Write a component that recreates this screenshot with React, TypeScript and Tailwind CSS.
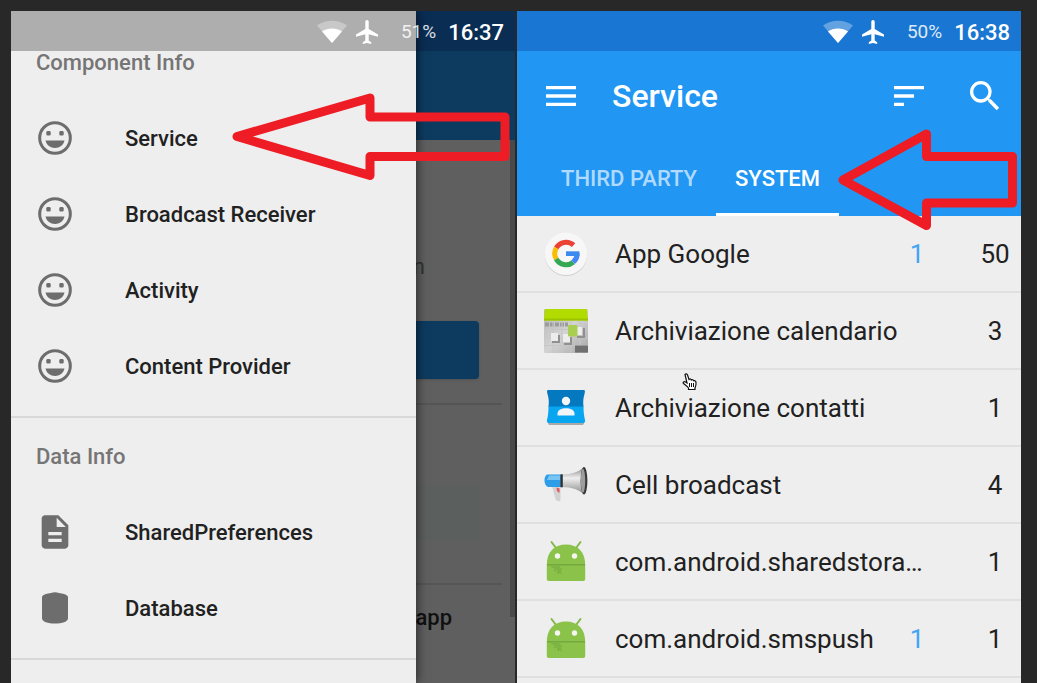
import type { ComponentType, ReactNode } from "react";
import { MdDescription, MdMenu, MdSearch, MdSort } from "react-icons/md";

type IconProps = { className?: string };

function WifiIcon({ className }: IconProps) {
  return (
    <svg viewBox="0 0 30 24" className={className} aria-hidden="true">
      <path d="M0 5.500C8-1 22-1 30 5.500L15 23Z" fill="#fff" fillOpacity="0.32" />
      <path d="M5 11.500C10 7.500 20 7.500 25 11.500L15 23Z" fill="#fff" />
    </svg>
  );
}

function PlaneIcon({ className }: IconProps) {
  return (
    <svg viewBox="0 0 24 26" className={className} aria-hidden="true" fill="#fff">
      <path d="M12 1c-.9 0-1.700.8-1.700 1.700V10L1 15.500V17.800l9.300-2.600V21.500L7.800 23.200V25l4.200-1 4.200 1V23.200L13.700 21.500V15.200L23 17.800V15.500L13.700 10V2.700C13.700 1.800 12.900 1 12 1Z" />
    </svg>
  );
}

function SmileIcon({ className }: IconProps) {
  return (
    <svg viewBox="0 0 24 24" className={className} aria-hidden="true" fill="currentColor">
      <circle cx="12" cy="12" r="9.200" fill="none" stroke="currentColor" strokeWidth="1.800" />
      <rect x="6.800" y="7.800" width="2.600" height="2.700" rx="0.800" />
      <rect x="14.600" y="7.800" width="2.600" height="2.700" rx="0.800" />
      <path d="M6.300 13.500H17.700C17 16.300 14.800 18 12 18S7 16.300 6.300 13.500Z" />
    </svg>
  );
}

function DatabaseIcon({ className }: IconProps) {
  return (
    <svg viewBox="0 0 40 40" className={className} aria-hidden="true" fill="currentColor">
      <path d="M7 9C7 6.500 13 5.500 16 5Q20 3.500 24 5C27 5.500 33 6.500 33 9V30.500C33 33.500 27 35.500 20 35.500S7 33.500 7 30.500Z" />
    </svg>
  );
}

function GoogleIcon({ className }: IconProps) {
  return (
    <svg viewBox="0 0 44 44" className={className} aria-hidden="true">
      <circle cx="22" cy="22.800" r="21.200" fill="#cfcfcf" />
      <circle cx="22" cy="21.800" r="21.200" fill="#f7f7f7" />
      <g fill="none" strokeWidth="5">
        <path d="M29.600 13.200A11.300 11.300 0 0 0 12.200 16" stroke="#ea4335" />
        <path d="M12.200 16A11.300 11.300 0 0 0 12.200 27" stroke="#fbbc05" />
        <path d="M12.200 27A11.300 11.300 0 0 0 29.200 30.200" stroke="#34a853" />
        <path d="M29.200 30.200A11.300 11.300 0 0 0 33.200 21.600" stroke="#4285f4" />
      </g>
      <path d="M22 19.300H35.400V24H22Z" fill="#3b8bee" />
    </svg>
  );
}

function CalendarIcon({ className }: IconProps) {
  return (
    <svg viewBox="0 0 44 44" className={className} aria-hidden="true">
      <defs>
        <linearGradient id="calendar-page" x1="0" y1="0" x2="1" y2="1">
          <stop offset="0" stopColor="#b5b5b5" />
          <stop offset="0.5" stopColor="#d3d3d3" />
          <stop offset="1" stopColor="#a8a8a8" />
        </linearGradient>
      </defs>
      <rect width="44" height="44" rx="1.500" fill="url(#calendar-page)" />
      <path d="M1 0H43L44 11.500H0Z" fill="#b2dc00" />
      <path d="M0 9.500H44V11.500H0Z" fill="#9cc400" />
      <path d="M1 15.500H24" stroke="#9c9c9c" strokeWidth="4" strokeDasharray="4 1" />
      <path d="M0 20.500H44M0 29H44M0 36.500H44M9 12V44M18 12V44M27 12V44M36 12V44" stroke="#c6c6c6" strokeWidth="1" />
      <path d="M8 33H15V26M20 35H27V28M33 28H40V19" stroke="#909090" strokeWidth="2" fill="none" />
      <rect x="7" y="24" width="7" height="8" fill="#ececec" />
      <rect x="19" y="25" width="7" height="8" fill="#ededed" />
      <rect x="31" y="18" width="7" height="8" fill="#ededed" />
      <rect x="24" y="16" width="9.500" height="11.500" rx="1" fill="#a9cf52" />
      <rect x="31" y="36.500" width="13" height="7" fill="#707070" />
    </svg>
  );
}

function ContactsIcon({ className }: IconProps) {
  return (
    <svg viewBox="0 0 44 44" className={className} aria-hidden="true">
      <path d="M4 36H40V37C40 38.500 39 39 38 39H6C5 39 4 38.500 4 37Z" fill="#a9a9a9" />
      <path d="M4.500 4H39.500C41.500 4 41 6 40.500 8C39 13 39 16 39.500 21H4.500C5 16 5 13 3.500 8C3 6 2.500 4 4.500 4Z" fill="#0479bf" />
      <path d="M4.500 20.500H39.500C39.500 26 40 30 41 34C41.500 36 40.500 37 39 37H5C3.500 37 2.500 36 3 34C4 30 4.500 26 4.500 20.500Z" fill="#08a5f1" />
      <circle cx="22" cy="15" r="4.200" fill="#f2f6f8" />
      <path d="M13.500 29.500V27.500C13.500 20.500 30.500 20.500 30.500 27.500V29.500Z" fill="#f2f6f8" />
    </svg>
  );
}

function MegaphoneIcon({ className }: IconProps) {
  return (
    <svg viewBox="0 0 44 44" className={className} aria-hidden="true">
      <defs>
        <linearGradient id="horn" x1="0" y1="0" x2="0" y2="1">
          <stop offset="0" stopColor="#8a8a8a" />
          <stop offset="0.4" stopColor="#efefef" />
          <stop offset="1" stopColor="#8c8c8c" />
        </linearGradient>
      </defs>
      <path d="M8 23L16.500 24.500V37C16 39 12.500 38.500 11.500 36Z" fill="#d2d2d2" />
      <path d="M12.500 24.500L15.500 25.500V30L13 28Z" fill="#e3565c" />
      <path d="M3 11.500H17V24H4C-.5 22.500-.5 13.500 3 11.500Z" fill="#2e9de8" />
      <path d="M5 12.500H16V17H3Z" fill="#76c3f4" />
      <path d="M18 11.500C28 11.500 35 8.500 39.500 4.500V31C35 27 28 24 18 24Z" fill="url(#horn)" />
      <path d="M16.500 11.300H18.800V24.300H16.500Z" fill="#303030" />
      <ellipse cx="40" cy="17.800" rx="3.400" ry="13.800" fill="#383838" />
      <ellipse cx="39" cy="17.800" rx="2.200" ry="12" fill="#9d9d9d" />
    </svg>
  );
}

function AndroidIcon({ className }: IconProps) {
  return (
    <svg viewBox="0 0 44 44" className={className} aria-hidden="true">
      <path d="M7.500 2L12 8M36.500 2L32 8" stroke="#83b84b" strokeWidth="2" strokeLinecap="round" />
      <path d="M2.800 25C2.800 12 10 4.500 22 4.500S41.200 12 41.200 25V39C41.200 40.300 40.500 41 39.200 41H4.800C3.500 41 2.800 40.300 2.800 39Z" fill="#8bc34a" />
      <path d="M3 24.800H41" stroke="#75a83e" strokeWidth="1.500" />
      <path d="M5 25L18 35L16 26Z" fill="#7eb443" />
      <path d="M14 33L18 28M10 30L15 34" stroke="#75a83e" strokeDasharray="2 2" />
      <circle cx="13.500" cy="16" r="2.700" fill="#f4f6ef" />
      <circle cx="30.500" cy="16" r="2.700" fill="#f4f6ef" />
    </svg>
  );
}

function StatusBar({ battery, time }: { battery: string; time: string }) {
  return (
    <div className="flex h-10 items-center justify-end pt-0.5 pr-[11px] text-white">
      <WifiIcon className="mr-2 h-6 w-[30px]" />
      <PlaneIcon className="mr-[22px] h-[26px] w-6" />
      <span className="mr-3 text-[19px] opacity-85">{battery}</span>
      <time className="text-[22px] font-medium">{time}</time>
    </div>
  );
}

function DrawerGroup({ title, children }: { title: string; children: ReactNode }) {
  return (
    <section className="border-b-2 border-[#d8d8d8] pb-3">
      <h2 className="flex h-[76px] items-center pl-[25px] text-[22px] font-medium text-[#757575]">{title}</h2>
      <ul>{children}</ul>
    </section>
  );
}

function DrawerItem({ icon: Icon, label }: { icon: ComponentType<IconProps>; label: string }) {
  return (
    <li>
      <button type="button" className="flex h-[76px] w-full items-center pl-6 text-[22px] font-medium text-[#212121]">
        <Icon className="mr-[50px] size-10 text-[#6d6d6d]" />
        {label}
      </button>
    </li>
  );
}

function DrawerScreen() {
  return (
    <section className="relative flex-1 overflow-hidden bg-[#5f5f5f]">
      <div className="h-10 bg-[#0a2d54]" />
      <div className="h-[89px] bg-[#0d3b60]" />
      <div className="flex">
        <div className="min-w-0 flex-1 pr-2">
          <p className="flex h-[181px] items-center justify-end pt-[72px] pr-[77px] text-[22px] text-[#333]">n</p>
          <div className="mr-[23px] h-[58px] rounded-sm bg-[#0d3b60] shadow-sm" />
          <div className="mt-6 h-0.5 bg-[#555]" />
          <div className="mt-[81px] mr-[23px] h-14 bg-[#5b5f5e]" />
          <div className="mt-[41px] h-0.5 bg-[#555]" />
          <p className="pt-4 pr-[50px] text-right text-[22px] font-medium text-[#101010]">app</p>
        </div>
        <div className="h-[477px] w-[5px] bg-[#494949]" />
      </div>

      <nav className="absolute inset-y-0 left-0 w-[405px] overflow-hidden bg-[#eee] pt-[13px] shadow-[1px_0_10px_rgba(0,0,0,0.6)]">
        <DrawerGroup title="Component Info">
          <DrawerItem icon={SmileIcon} label="Service" />
          <DrawerItem icon={SmileIcon} label="Broadcast Receiver" />
          <DrawerItem icon={SmileIcon} label="Activity" />
          <DrawerItem icon={SmileIcon} label="Content Provider" />
        </DrawerGroup>
        <DrawerGroup title="Data Info">
          <DrawerItem icon={MdDescription} label="SharedPreferences" />
          <DrawerItem icon={DatabaseIcon} label="Database" />
        </DrawerGroup>
        <div className="absolute inset-x-0 top-0 h-10 bg-[#aeaeae]" />
      </nav>
      <div className="absolute inset-x-0 top-0">
        <StatusBar battery="51%" time="16:37" />
      </div>
      <svg viewBox="232 93 279 89" className="absolute top-[82px] left-[221px] h-[89px] w-[279px]" aria-hidden="true">
        <path
          d="M237 136.500L370 98V117H505V156.500H370V175.500Z"
          fill="none"
          stroke="#ee1c25"
          strokeWidth="9"
          strokeLinejoin="round"
        />
      </svg>
    </section>
  );
}

type AppRow = { icon: ComponentType<IconProps>; name: string; running?: number; total: number };

const apps: AppRow[] = [
  { icon: GoogleIcon, name: "App Google", running: 1, total: 50 },
  { icon: CalendarIcon, name: "Archiviazione calendario", total: 3 },
  { icon: ContactsIcon, name: "Archiviazione contatti", total: 1 },
  { icon: MegaphoneIcon, name: "Cell broadcast", total: 4 },
  { icon: AndroidIcon, name: "com.android.sharedstora…", total: 1 },
  { icon: AndroidIcon, name: "com.android.smspush", running: 1, total: 1 },
];

function ServiceScreen() {
  return (
    <section className="relative flex-1 overflow-hidden bg-[#eee]">
      <div className="bg-[#1976d2]">
        <StatusBar battery="50%" time="16:38" />
      </div>
      <header className="bg-[#2196f3] text-white">
        <div className="flex h-[90px] items-center pr-4 pl-6">
          <button type="button" aria-label="Menu">
            <MdMenu className="size-10" />
          </button>
          <h1 className="ml-[31px] flex-1 text-[32px] font-medium">Service</h1>
          <button type="button" aria-label="Sort" className="mr-9">
            <MdSort className="size-10" />
          </button>
          <button type="button" aria-label="Search">
            <MdSearch className="size-10" />
          </button>
        </div>
        <div role="tablist" className="flex h-[75px] pl-[25px] text-[22px] font-medium">
          <button type="button" role="tab" aria-selected="false" className="px-[19px] text-[#b0daff]">
            THIRD PARTY
          </button>
          <button type="button" role="tab" aria-selected="true" className="border-b-[3px] border-white px-[19px] pt-[3px]">
            SYSTEM
          </button>
        </div>
      </header>
      <ul>
        {apps.map(({ icon: Icon, name, running, total }) => (
          <li key={name} className="border-b-2 border-[#dfe0e0]">
            <button type="button" className="flex h-[75px] w-full items-center pl-[27px] text-left text-[26px] text-[#212121]">
              <Icon className="mr-[27px] size-11 shrink-0" />
              <span className="min-w-0 flex-1 pt-0.5 whitespace-nowrap">{name}</span>
              {running !== undefined && <span className="mr-9 w-10 pt-0.5 text-center text-[#42a5f5]">{running}</span>}
              <span className="mr-1 w-11 pt-0.5 text-center">{total}</span>
            </button>
          </li>
        ))}
      </ul>

      <svg viewBox="837 129 181 102" className="absolute top-[118px] left-[320px] h-[102px] w-[181px]" aria-hidden="true">
        <path
          d="M843 180L926.500 134V156.500H1012.500V203H926.500V225.500Z"
          fill="none"
          stroke="#ee1c25"
          strokeWidth="9"
          strokeLinejoin="round"
        />
      </svg>
      <svg viewBox="0 0 16 18" className="absolute top-[362px] left-[165px] h-[18px] w-4" aria-hidden="true">
        <path
          d="M3 1.500C3.500.5 5 .5 5.500 2L7 6.500C8 5.500 9 6 9.300 7C10.300 6.300 11.300 6.800 11.600 7.800C12.800 7.300 14 8 14 9.500C14.300 12 14 13 13 15V16.500H6.500V15C5 13 3.500 12 1.500 10.500C.5 9.500 2 8 3.500 9L5 10Z"
          fill="#fff"
          stroke="#111"
          strokeWidth="1.200"
        />
        <path d="M7.500 10V14M9.500 10V14M11.500 10V14" stroke="#111" />
      </svg>
    </section>
  );
}

export default function App() {
  return (
    <main className="flex h-screen gap-0.5 overflow-hidden bg-[#282828] pt-[11px] pr-4 pl-[11px] font-[Roboto,'Liberation_Sans',sans-serif]">
      <DrawerScreen />
      <ServiceScreen />
    </main>
  );
}
